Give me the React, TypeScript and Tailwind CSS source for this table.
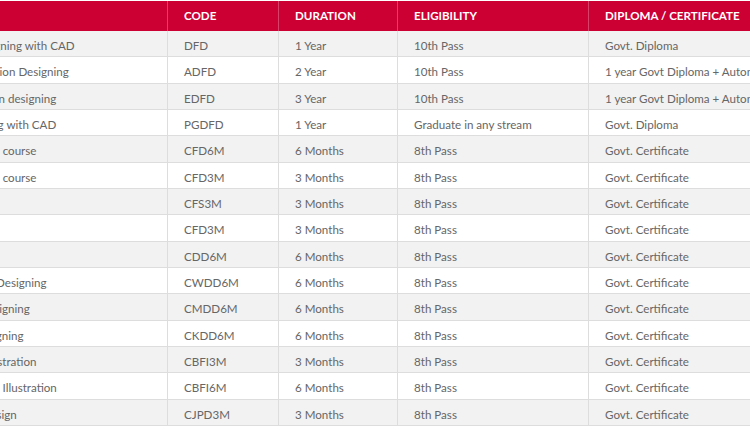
const rows = [
  ["Diploma in Fashion Designing with CAD", "DFD", "1 Year", "10th Pass", "Govt. Diploma"],
  ["Advance Diploma in Fashion Designing", "ADFD", "2 Year", "10th Pass", "1 year Govt Diploma + Autonomous Diploma"],
  ["Expert Diploma in Fashion designing", "EDFD", "3 Year", "10th Pass", "1 year Govt Diploma + Autonomous Diploma"],
  ["PGD in Fashion Designing with CAD", "PGDFD", "1 Year", "Graduate in any stream", "Govt. Diploma"],
  ["Certificate in Fashion 6M course", "CFD6M", "6 Months", "8th Pass", "Govt. Certificate"],
  ["Certificate in Fashion 3M course", "CFD3M", "3 Months", "8th Pass", "Govt. Certificate"],
  ["Certificate in Styling", "CFS3M", "3 Months", "8th Pass", "Govt. Certificate"],
  ["Certificate in Fashion", "CFD3M", "3 Months", "8th Pass", "Govt. Certificate"],
  ["Certificate in Dress", "CDD6M", "6 Months", "8th Pass", "Govt. Certificate"],
  ["Course in Women Wear Designing", "CWDD6M", "6 Months", "8th Pass", "Govt. Certificate"],
  ["Course in Men Wear Designing", "CMDD6M", "6 Months", "8th Pass", "Govt. Certificate"],
  ["Course in Kid Wear Designing", "CKDD6M", "6 Months", "8th Pass", "Govt. Certificate"],
  ["Certificate in Fashion Illustration", "CBFI3M", "3 Months", "8th Pass", "Govt. Certificate"],
  ["Certificate in Pro Fashion Illustration", "CBFI6M", "6 Months", "8th Pass", "Govt. Certificate"],
  ["Certificate in Jewelry Design", "CJPD3M", "3 Months", "8th Pass", "Govt. Certificate"],
]

const widths = ["w-[311px]", "w-[111px]", "w-[119px]", "w-[191px]", "w-[300px]"]
const headers = ["COURSE", "CODE", "DURATION", "ELIGIBILITY", "DIPLOMA / CERTIFICATE"]

export default function App() {
  return (
    <div className="w-[750px] h-[430px] overflow-hidden bg-white font-['Lato',sans-serif]">
      <div className="mt-px -ml-[144px] w-[1032px]">
        {/* header */}
        <div className="flex h-[30px] bg-[#cc0033] text-white text-[11.6px] font-bold">
          {headers.map((h, i) => (
            <div
              key={h}
              className={`${widths[i]} shrink-0 flex items-center pl-4 whitespace-nowrap ${i > 0 ? "border-l border-[#d9406a]" : ""}`}
            >
              {h}
            </div>
          ))}
        </div>

        {/* body */}
        {rows.map((r, ri) => (
          <div
            key={ri}
            className={`flex h-[26.33px] border-b border-[#dddddd] text-[11.6px] text-[#666666] ${ri % 2 === 0 ? "bg-[#f2f2f2]" : "bg-white"}`}
          >
            {r.map((c, ci) => (
              <div
                key={ci}
                className={`${widths[ci]} shrink-0 flex items-center pl-4 pt-1 whitespace-nowrap overflow-hidden ${ci > 0 ? "border-l border-[#dddddd]" : ""}`}
              >
                {c}
              </div>
            ))}
          </div>
        ))}
      </div>
    </div>
  )
}
